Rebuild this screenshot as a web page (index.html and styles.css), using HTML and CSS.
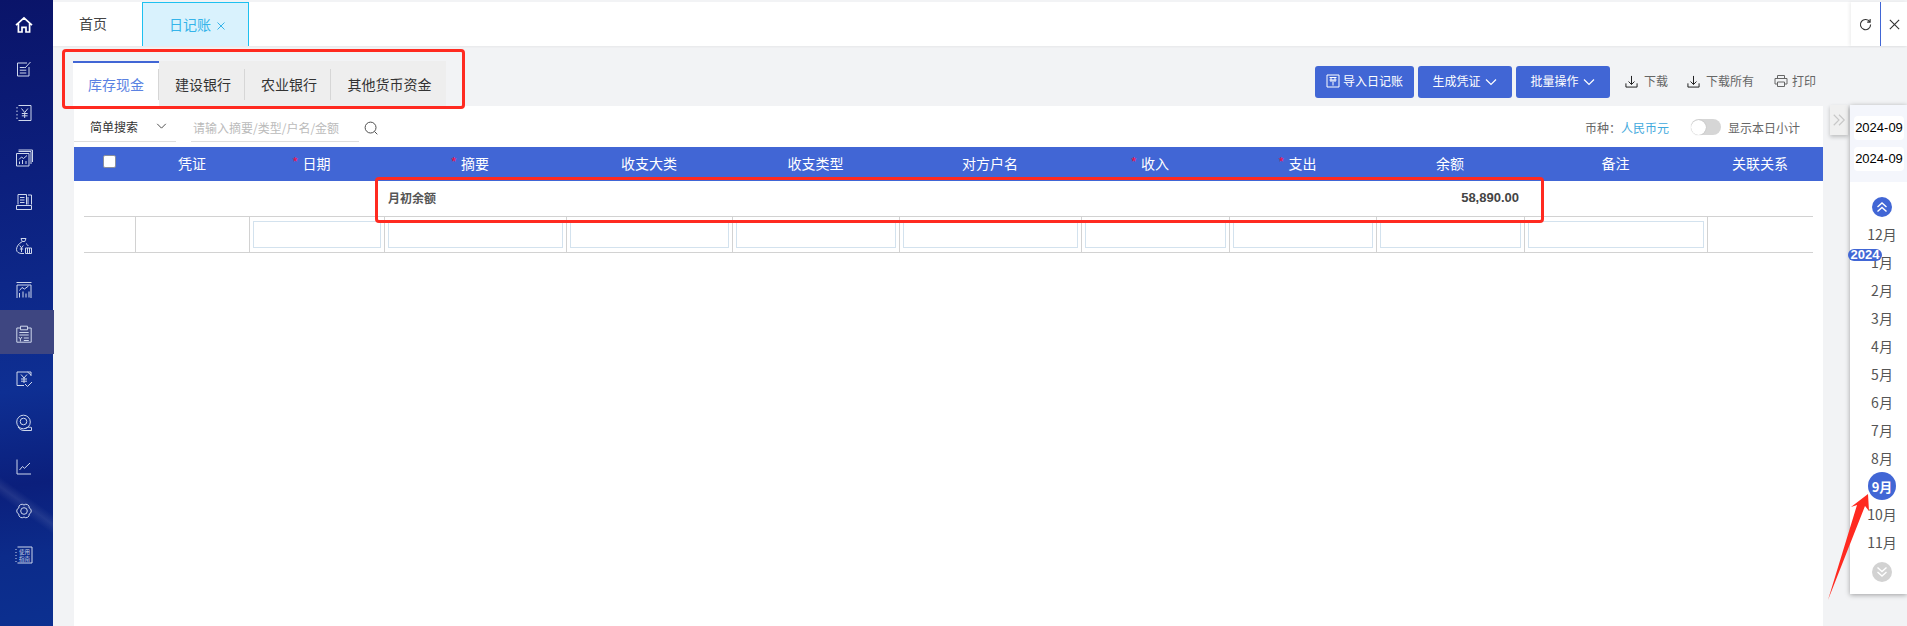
FILE: index.html
```html
<!DOCTYPE html>
<html lang="zh-CN">
<head>
<meta charset="utf-8">
<title>日记账</title>
<link rel="stylesheet" href="styles.css">
</head>
<body>
<div class="app">
  <nav class="side">
    <a class="side-item side-home"><svg viewBox="0 0 18 18"><path d="M1 9.200 9 1.800l8 7.400M3.400 7.400V16H7v-4.600h4V16h3.600V7.400" stroke-width="1.7"/></svg></a>
    <a class="side-item"><svg viewBox="0 0 18 18"><path d="M12 3H2.500v13H14V7M4.800 7.500h5M4.800 10.200h6.500M4.800 13h6.500M10 8l5.500-6"/></svg></a>
    <a class="side-item"><svg viewBox="0 0 18 18"><path d="M3.500 1.500H16v15H3.500M2 3v1.500M2 6.500V8M2 10v1.500M2 13.500V15M6.500 4.500 9.700 8.500l3.200-4M9.700 8.500V14M6.800 9.500h5.800M6.800 11.800h5.800"/></svg></a>
    <a class="side-item"><svg viewBox="0 0 18 18"><path d="M1.500 4.500h12.500v12.500H1.500zM3.500 2.500H16V15M3.500 1h14v12M4 10.500l2.500-2.500 2 1.500L12 6.500M4.500 15v-2.500M7.500 15v-4M11 15v-3"/></svg></a>
    <a class="side-item"><svg viewBox="0 0 18 18"><path d="M3 11.500V1.500h8.500v10M13 2h3.500v9.500M13 4v7.500M1.500 12.500h15V16.500h-15zM5 4.500h4.500M5 7h4.500M5 9.500h4.500"/></svg></a>
    <a class="side-item"><svg viewBox="0 0 18 18"><path d="M6 1.500h5L9.800 4.500H7.200zM7 4.800C3.800 6.500 1.500 9.500 1.500 12.500c0 2.800 2.500 4 5.500 4h2M11 6.500c1 .7 1.700 1.500 2.300 2.500M4.700 8.500l1.800 2.400 1.800-2.400M6.500 10.900V15M4.800 12h3.400M10.500 11h6v5.500h-6zM12.500 11v5.500M14.500 11v5.500"/></svg></a>
    <a class="side-item"><svg viewBox="0 0 18 18"><path d="M1.500 1.500h15M2 4h14v13M2 4v13M4.500 9.500l2.500-3 2.500 1.500L13.500 5M4.500 16.500V12M8 16.500v-6M11 16.500v-4M14 16.500v-6"/></svg></a>
    <a class="side-item side-active"><svg viewBox="0 0 18 18"><path d="M5.500 3H1.800v14.200h14.400V3h-3.700M5.500 1.200h7v3.600h-7zM4.300 7.500h9.400M4.300 10h9.400M3.800 12l1.600 2 1.600-2M5.400 14v2.500M8.800 13h5M8.800 15.500h5"/></svg></a>
    <a class="side-item"><svg viewBox="0 0 18 18"><path d="M16 6V2H2v13.500h7M12.500 2l3.500 3M6 4.500l3 3.500 3-3.500M9 8v5M6 9h6M6 11.200h6M10 14l2.500 2.500L17 12"/></svg></a>
    <a class="side-item"><svg viewBox="0 0 18 18"><circle cx="8.500" cy="8" r="6.800"/><circle cx="8.500" cy="7.500" r="3.300"/><path d="M3 12.800c1 2 3 3.700 6 3.700h7.500v-3c-1.800-.5-3.500-.5-6 .7"/></svg></a>
    <a class="side-item"><svg viewBox="0 0 18 18"><path d="M2 1.500V16h14M4.500 12l3-3.500 2 1.800L15 5"/></svg></a>
    <a class="side-item"><svg viewBox="0 0 18 18"><path d="M9 3A3.200 3.200 0 0 1 14.200 6 3.200 3.200 0 0 1 14.200 12 3.200 3.200 0 0 1 9 15 3.200 3.200 0 0 1 3.800 12 3.200 3.200 0 0 1 3.800 6 3.200 3.200 0 0 1 9 3Z"/><circle cx="9" cy="9" r="3.300"/></svg></a>
    <a class="side-item"><svg viewBox="0 0 18 18"><path d="M2.500 1H17v16H2.500M1 3v1M1 6v1M1 9v1M1 12v1M1 15v1"/><text class="side-guide" x="4" y="8">使用</text><text class="side-guide" x="4" y="15">指南</text></svg></a>
  </nav>

  <div class="work">
    <header class="tabbar">
      <div class="page-tab">首页</div>
      <div class="page-tab page-tab-on">日记账<svg viewBox="0 0 8 8" class="page-x"><path d="m.5.5 7 7M7.500.5l-7 7"/></svg></div>
      <div class="tabbar-tools">
        <button class="tool-btn tool-refresh"><svg viewBox="0 0 14 14" class="tool-ico"><path d="M11.700 4.200A5.500 5.500 0 1 0 12.500 7M12 1.200v3.300H8.800"/></svg></button>
        <button class="tool-btn"><svg viewBox="0 0 14 14" class="tool-ico"><path d="m2 2 10 10M12 2 2 12"/></svg></button>
      </div>
    </header>

    <section class="toolbar">
      <div class="acct-tabs">
        <div class="acct-tab acct-on">库存现金</div>
        <div class="acct-tab acct-line">建设银行</div>
        <div class="acct-tab acct-line">农业银行</div>
        <div class="acct-tab acct-line acct-wide">其他货币资金</div>
      </div>
      <div class="actions">
        <button class="btn btn-import"><svg viewBox="0 0 14 14" class="btn-ico"><path d="M1 1h12v12H1zM3.500 3.500h7M3.500 6h7M5 3.500V8M9 3.500V8M7 6v5.500"/></svg>导入日记账</button>
        <button class="btn">生成凭证<svg viewBox="0 0 12 8" class="btn-chev"><path d="m1 1.500 5 5 5-5"/></svg></button>
        <button class="btn">批量操作<svg viewBox="0 0 12 8" class="btn-chev"><path d="m1 1.500 5 5 5-5"/></svg></button>
        <a class="link link-dl"><svg viewBox="0 0 14 14" class="link-ico"><path d="M7 1v9M3.800 7 7 10.200 10.200 7M1 9v4h12V9"/></svg>下载</a>
        <a class="link link-dlall"><svg viewBox="0 0 14 14" class="link-ico"><path d="M7 1v9M3.800 7 7 10.200 10.200 7M1 9v4h12V9"/></svg>下载所有</a>
        <a class="link link-print"><svg viewBox="0 0 14 14" class="print-ico"><path d="M3.500 4V1.500h7V4M3 10H1V4.500h12V10h-2M3.500 8h7v4.500h-7z"/></svg>打印</a>
      </div>
    </section>

    <div class="body-row">
      <main class="sheet">
        <div class="filter">
          <div class="select"><span>简单搜索</span><svg viewBox="0 0 12 7" class="sel-chev"><path d="m1 1 5 5 5-5"/></svg></div>
          <div class="search">请输入摘要/类型/户名/金额</div>
          <svg viewBox="0 0 16 16" class="search-ico"><circle cx="7" cy="7" r="5.800"/><path d="m11.200 11.200 3 3"/></svg>
          <div class="filter-right">
            <span class="cur-label">币种：</span><span class="cur-val">人民币元</span>
            <span class="toggle"><span class="knob"></span></span>
            <span class="cur-label">显示本日小计</span>
          </div>
        </div>
        <div class="grid grid-head">
          <div class="th"><span class="check"></span></div>
          <div class="th">凭证</div>
          <div class="th"><span class="req">日期</span></div>
          <div class="th"><span class="req">摘要</span></div>
          <div class="th">收支大类</div>
          <div class="th">收支类型</div>
          <div class="th">对方户名</div>
          <div class="th"><span class="req">收入</span></div>
          <div class="th"><span class="req">支出</span></div>
          <div class="th">余额</div>
          <div class="th">备注</div>
          <div class="th">关联关系</div>
        </div>
        <div class="rows">
          <div class="grid grid-open">
            <div class="open-label">月初余额</div>
            <div class="open-amount">58,890.00</div>
          </div>
          <div class="grid grid-edit">
            <div class="td"></div>
            <div class="td"></div>
            <div class="td td-line"><span class="cell-input"></span></div>
            <div class="td td-line"><span class="cell-input"></span></div>
            <div class="td td-line"><span class="cell-input"></span></div>
            <div class="td td-line"><span class="cell-input"></span></div>
            <div class="td td-line"><span class="cell-input"></span></div>
            <div class="td td-line"><span class="cell-input"></span></div>
            <div class="td td-line"><span class="cell-input"></span></div>
            <div class="td td-line"><span class="cell-input"></span></div>
            <div class="td td-line"><span class="cell-input"></span></div>
            <div class="td td-line"></div>
          </div>
        </div>
      </main>

      <div class="gutter">
        <button class="collapse"><svg viewBox="0 0 12 12" class="collapse-ico"><path d="m1.500 1.500 4.500 4.500-4.500 4.500M6 1.500l4.500 4.500L6 10.500"/></svg></button>
      </div>

      <aside class="panel">
        <div class="panel-dates">
          <div class="date-box">2024-09</div>
          <div class="date-box">2024-09</div>
        </div>
        <div class="months">
          <span class="round round-up"><svg viewBox="0 0 12 12" class="round-ico"><path d="m1.500 6 4.500-4 4.500 4M1.500 10.500l4.500-4 4.500 4"/></svg></span>
          <div class="month-list">
            <div class="month">12月</div>
            <div class="month">1月</div>
            <div class="month">2月</div>
            <div class="month">3月</div>
            <div class="month">4月</div>
            <div class="month">5月</div>
            <div class="month">6月</div>
            <div class="month">7月</div>
            <div class="month">8月</div>
            <div class="month"><span class="month-on">9月</span></div>
            <div class="month">10月</div>
            <div class="month">11月</div>
          </div>
          <span class="round round-down"><svg viewBox="0 0 12 12" class="round-ico"><path d="m1.500 1.500 4.500 4 4.500-4M1.500 6l4.500 4 4.500-4"/></svg></span>
        </div>
        <span class="year-badge">2024</span>
      </aside>
    </div>
  </div>

  <div class="mark mark-tabs"></div>
  <div class="mark mark-row"></div>
  <svg class="mark-arrow" viewBox="0 0 44 110"><path d="M0 106 L29 11 L23 13 L40 0 L41 17 L37 12 Z"/></svg>
</div>
</body>
</html>
```
FILE: styles.css
```css
* { box-sizing: border-box; }
html, body { margin: 0; height: 100%; overflow: hidden; }
body {
  font-family: "Noto Sans CJK SC", "Liberation Sans", sans-serif;
  font-size: 12px;
  color: #333;
  background: #f2f3f5;
}
button { font: inherit; border: 0; padding: 0; cursor: pointer; }
svg { fill: none; stroke: currentColor; stroke-width: 1; display: block; }

.app { position: relative; display: flex; width: 1907px; height: 626px; overflow: hidden; }

/* sidebar */
.side {
  flex: 0 0 53px;
  min-width: 0;
  padding-top: 3px;
  isolation: isolate;
  background:
    linear-gradient(35.6deg, transparent 19.5%, rgba(255,255,255,.09) 21%, transparent 22.5%),
    linear-gradient(172deg, #0a1469 0%, #0c1f7d 28%, #0e2f93 62%, #0b1f7c 77%, #0c2b8a 88%, #0c3090 100%);
  color: #ced7ec;
}
.side-item { display: flex; align-items: center; justify-content: center; width: 54px; height: 44.2px; position: relative; padding-right: 6px; }
.side-item svg { width: 18px; height: 18px; }
.side-home { color: #fff; }
.side-active::before { content: ""; position: absolute; z-index: -1; left: 0; right: 0; top: -2px; height: 44px; background: #3e4681; }
.side-guide { font-size: 5.5px; fill: currentColor; stroke: none; }

.work { flex: 1; min-width: 0; display: flex; flex-direction: column; }

/* page tabs */
.tabbar { display: flex; flex: 0 0 44px; margin: 2px 0 1px; background: #fff; box-shadow: 0 1px 2px rgba(0,0,0,.05); }
.page-tab { width: 89px; padding-left: 26px; font-size: 14px; line-height: 43px; color: #444; }
.page-tab-on { display: flex; align-items: center; width: 107px; background: #d9f2fd; border: 1px solid #1dc0f0; border-bottom: 0; color: #35b4ea; }
.page-x { width: 8px; height: 8px; margin: 2px 0 0 6px; }
.tabbar-tools { margin-left: auto; display: flex; box-shadow: -2px 0 3px rgba(0,0,0,.06); }
.tool-btn { width: 26px; height: 44px; background: #fff; color: #333; display: flex; align-items: center; justify-content: center; }
.tool-refresh { width: 30px; border-right: 1px solid #4166d5; }
.tool-ico { width: 13px; height: 13px; stroke-width: 1.2; }

/* toolbar */
.toolbar { flex: 0 0 59px; display: flex; justify-content: space-between; align-items: flex-end; padding: 0 91px 0 20px; }
.acct-tabs { display: flex; height: 45px; background: #eee; }
.acct-tab { position: relative; width: 86px; padding-top: 2px; font-size: 14px; line-height: 42px; text-align: center; color: #333; }
.acct-line { padding-left: 2px; }
.acct-wide { width: 115px; }
.acct-on { background: #fff; border-top: 2px solid #4166d5; padding-top: 0; color: #5b82e2; }
.acct-line::before { content: ""; position: absolute; left: -1px; top: 8px; height: 31px; width: 1px; background: #d6d6d6; }
.actions { display: flex; align-items: center; height: 32px; margin-bottom: 8px; }
.btn { display: flex; align-items: center; justify-content: center; width: 94px; height: 32px; margin-right: 4px; padding-bottom: 3px; border-radius: 3px; background: #4166d5; color: #fff; font-size: 12px; }
.btn-import { width: 99px; }
.btn-ico { width: 14px; height: 14px; margin-right: 3px; }
.btn-chev { width: 12px; height: 8px; margin: 2px 0 0 5px; stroke-width: 1.2; }
.link { display: flex; align-items: center; padding-bottom: 3px; color: #666; font-size: 12px; }
.link-ico { width: 13px; height: 13px; margin: 2px 6px 0 0; color: #111; }
.print-ico { width: 14px; height: 14px; margin-right: 4px; color: #666; }
.link-dl { margin-left: 11px; }
.link-dlall { margin-left: 19px; }
.link-print { margin-left: 20px; }

/* body */
.body-row { flex: 1; display: flex; padding-left: 21px; min-height: 0; }
.sheet { flex: 0 0 1749px; background: #fff; }
.filter { display: flex; align-items: flex-start; height: 41px; }
.select { display: flex; align-items: center; width: 102px; height: 36px; padding: 5px 9px 0 16px; border-bottom: 1px solid #ddd; color: #333; }
.select span { flex: 1; }
.sel-chev { width: 11px; height: 6px; }
.search { width: 168px; height: 36px; margin-left: 15px; padding-left: 2px; line-height: 44px; border-bottom: 1px solid #ddd; color: #bbb; }
.search-ico { width: 15px; height: 15px; margin: 15px 0 0 5px; color: #444; }
.filter-right { margin-left: auto; display: flex; align-items: center; height: 34px; padding: 8px 23px 0 0; color: #666; }
.cur-val { color: #3fa9dd; margin-right: 22px; }
.toggle { display: block; width: 30px; height: 16px; margin-right: 7px; border-radius: 8px; background: #d6d6d6; }
.knob { display: block; width: 15px; height: 15px; margin: .5px; border-radius: 50%; background: #fff; box-shadow: 0 0 1px rgba(0,0,0,.3); }

.grid { display: grid; grid-template-columns: 51px 114px 135px 182px 166px 167px 182px 148px 147px 148px 183px 106px; }
.grid-head { height: 34px; padding: 0 10px; background: #4166d5; color: #fff; }
.th { display: flex; align-items: center; justify-content: center; padding-bottom: 3px; font-size: 14px; }
.check { width: 13px; height: 13px; margin-bottom: 2px; border: 1px solid #8a8f9c; border-radius: 2px; background: #fff; }
.req { position: relative; }
.req::before { content: "*"; position: absolute; right: 100%; top: -1px; margin-right: 4px; color: #f0134d; font-size: 14px; }
.rows { padding: 0 10px; }
.grid-open { height: 35px; align-items: center; padding-bottom: 2px; font-size: 12px; font-weight: 700; color: #555; }
.open-label { grid-column: 4; padding-left: 4px; }
.open-amount { grid-column: 10; padding-right: 5px; text-align: right; font-family: "Liberation Sans", sans-serif; font-size: 13px; color: #444; }
.grid-edit { height: 37px; border-top: 1px solid #d2d2d2; border-bottom: 1px solid #d2d2d2; }
.td { padding: 4px 3px; min-width: 0; }
.td:nth-child(2) { border-left: 1px solid #d2d2d2; }
.td-line { border-left: 1px solid #d2d2d2; }
.cell-input { display: block; height: 27px; border: 1px solid #d3e2ee; }

/* right panel */
.gutter { flex: 0 0 27px; padding-left: 7px; }
.collapse { display: flex; align-items: center; justify-content: center; width: 18px; height: 30px; margin-top: -1px; background: #f0f0f0; box-shadow: 0 2px 4px rgba(0,0,0,.22); color: #c8c8c8; }
.collapse-ico { width: 14px; height: 14px; }
.panel { position: relative; flex: 0 0 57px; align-self: flex-start; margin-top: -1px; background: #fff; box-shadow: 0 1px 5px rgba(0,0,0,.35); }
.panel-dates { height: 77px; padding: 11px 3px 0 4px; background: #f4f6fc; }
.date-box { height: 24px; margin-bottom: 7px; border-radius: 4px; background: #fff; color: #000; font-family: "Liberation Sans", sans-serif; font-size: 13px; line-height: 24px; text-align: center; white-space: nowrap; }
.months { display: flex; flex-direction: column; align-items: center; padding: 15px 7px 12px 14px; }
.round { display: flex; align-items: center; justify-content: center; width: 20px; height: 20px; border-radius: 50%; color: #fff; }
.round-up { background: #4166d5; margin-bottom: 3px; }
.round-down { background: #d2d2d2; margin-top: 6px; }
.round-ico { width: 12px; height: 12px; stroke-width: 1.4; }
.month-list { width: 100%; }
.month { display: flex; align-items: center; justify-content: center; height: 28px; font-size: 14px; color: #555; }
.month-on { display: flex; align-items: center; justify-content: center; width: 28px; height: 28px; border-radius: 50%; background: #4166d5; color: #fff; font-size: 13px; font-weight: 700; }
.year-badge { position: absolute; left: -2px; top: 144px; width: 34px; height: 12px; border-radius: 6px; background: #4166d5; color: #fff; font-family: "Liberation Sans", sans-serif; font-size: 13px; font-weight: 700; line-height: 12px; text-align: center; }

/* annotations drawn over the page */
.mark { position: absolute; border: 3px solid #ff2a20; border-radius: 4px; pointer-events: none; }
.mark-tabs { left: 62px; top: 49px; width: 403px; height: 60px; }
.mark-row { left: 375px; top: 177px; width: 1169px; height: 46px; }
.mark-arrow { position: absolute; left: 1828px; top: 494px; width: 44px; height: 110px; stroke: none; fill: #ff2a20; }
```
